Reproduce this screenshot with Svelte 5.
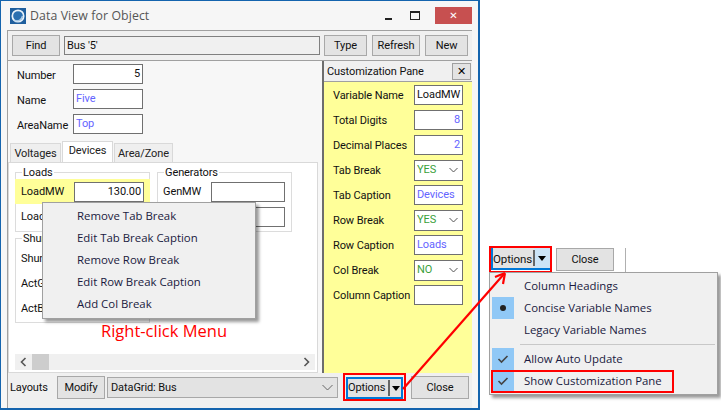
<script>
  const custFields = [
    { label: "Variable Name", value: "LoadMW", kind: "name" },
    { label: "Total Digits", value: "8", kind: "num" },
    { label: "Decimal Places", value: "2", kind: "num" },
    { label: "Tab Break", value: "YES", kind: "select" },
    { label: "Tab Caption", value: "Devices", kind: "text" },
    { label: "Row Break", value: "YES", kind: "select" },
    { label: "Row Caption", value: "Loads", kind: "text" },
    { label: "Col Break", value: "NO", kind: "select" },
    { label: "Column Caption", value: "", kind: "text" }
  ];
  const rightClick = [
    "Remove Tab Break",
    "Edit Tab Break Caption",
    "Remove Row Break",
    "Edit Row Break Caption",
    "Add Col Break"
  ];
</script>

<div class="screen">
  <div class="window">
    <div class="titlebar">
      <svg class="logo" width="16" height="16" viewBox="0 0 16 16">
        <rect width="16" height="16" fill="#1f5f9e" />
        <circle cx="8" cy="8" r="5.7" fill="#2a6fb0" stroke="#e8f1f9" stroke-width="1.7" />
        <path d="M4.5 12.5c3.500 1 7 0 8-4.500" fill="none" stroke="#a9cbe8" stroke-width="1.4" />
      </svg>
      <span class="title">Data View for Object</span>
      <div class="controls">
        <span class="min"></span>
        <span class="max"></span>
        <span class="close">✕</span>
      </div>
    </div>

    <div class="client">
      <div class="toolbar">
        <button class="find">Find</button>
        <div class="objname">Bus '5'</div>
        <button class="type">Type</button>
        <button class="refresh">Refresh</button>
        <button class="new">New</button>
      </div>

      <div class="middle">
        <div class="left">
          <div class="form">
            <span>Number</span><div class="input num black">5</div>
            <span>Name</span><div class="input blue">Five</div>
            <span>AreaName</span><div class="input blue">Top</div>
          </div>

          <div class="tabs">
            <span class="tab volt">Voltages</span>
            <span class="tab active">Devices</span>
            <span class="tab area">Area/Zone</span>
          </div>

          <div class="tabpanel">
            <div class="groups">
              <div class="col">
                <fieldset class="loads">
                  <legend>Loads</legend>
                  <div class="row hl"><span>LoadMW</span><div class="input num black">130.00</div></div>
                  <div class="row"><span>LoadMvar</span><div class="input"></div></div>
                </fieldset>
                <fieldset class="shunts">
                  <legend>Shunts</legend>
                  <div class="row"><span>ShuntMW</span></div>
                  <div class="row"><span>ActG</span></div>
                  <div class="row"><span>ActB</span></div>
                </fieldset>
              </div>
              <fieldset class="gens">
                <legend>Generators</legend>
                <div class="row"><span>GenMW</span><div class="input"></div></div>
                <div class="row"><span></span><div class="input"></div></div>
              </fieldset>
            </div>
            <div class="hscroll">
              <span class="arrow"><svg width="7" height="10" viewBox="0 0 7 10"><path d="M5.500 1L1.500 5l4 4" fill="none" stroke="#555" stroke-width="1.600" /></svg></span>
              <span class="thumb"></span>
              <span class="arrow end"><svg width="7" height="10" viewBox="0 0 7 10"><path d="M1.500 1l4 4-4 4" fill="none" stroke="#555" stroke-width="1.600" /></svg></span>
            </div>
          </div>
        </div>

        <div class="pane">
          <div class="panehead">
            <span>Customization Pane</span>
            <span class="panex">✕</span>
          </div>
          <div class="panebody">
            {#each custFields as f}
              <span>{f.label}</span>
              {#if f.kind === "select"}
                <div class="input sel green">{f.value}
                  <svg width="9" height="6" viewBox="0 0 9 6"><path d="M.5 1l4 4 4-4" fill="none" stroke="#555" /></svg>
                </div>
              {:else}
                <div class="input" class:num={f.kind === "num"} class:blue={f.kind !== "name"} class:black={f.kind === "name"}>{f.value}</div>
              {/if}
            {/each}
          </div>
        </div>
      </div>

      <div class="bottombar">
        <span class="layouts">Layouts</span>
        <button class="modify">Modify</button>
        <div class="layoutsel">DataGrid: Bus
          <svg width="11" height="7" viewBox="0 0 11 7"><path d="M.5 1l5 5 5-5" fill="none" stroke="#666" /></svg>
        </div>
        <div class="options">Options<i></i><b></b></div>
        <button class="closebtn">Close</button>
      </div>
    </div>
  </div>

  <!-- overlays -->
  <div class="menu rc">
    {#each rightClick as item}
      <div class="item">{item}</div>
    {/each}
  </div>
  <div class="caption">Right-click Menu</div>

  <div class="redbox b1"></div>

  <div class="callout">
    <div class="options">Options<i></i><b></b></div>
    <button class="closebtn">Close</button>
    <span class="vline"></span>
  </div>
  <div class="redbox b2"></div>

  <div class="menu opts">
    <div class="item">Column Headings</div>
    <div class="item"><span class="mark"><svg width="8" height="8"><circle cx="4" cy="4" r="3" fill="#222" /></svg></span>Concise Variable Names</div>
    <div class="item">Legacy Variable Names</div>
    <div class="sep"></div>
    <div class="item"><span class="mark"><svg width="12" height="10" viewBox="0 0 12 10"><path d="M1.500 5l3 3 6-6" fill="none" stroke="#444" stroke-width="1.600" /></svg></span>Allow Auto Update</div>
    <div class="item"><span class="mark"><svg width="12" height="10" viewBox="0 0 12 10"><path d="M1.500 5l3 3 6-6" fill="none" stroke="#444" stroke-width="1.600" /></svg></span>Show Customization Pane</div>
  </div>
  <div class="redbox b3"></div>

  <svg class="arrows" width="721" height="411" viewBox="0 0 721 411">
    <path d="M403 389 L504 274" stroke="#f00" stroke-width="2.200" fill="none" />
    <path d="M505 273 L495 277 M505 273 L503 284" stroke="#f00" stroke-width="2.200" fill="none" />
  </svg>
</div>

<style>
  :global(body) {
    margin: 0;
    background: #fff;
  }

  .screen {
    position: relative;
    width: 721px;
    height: 411px;
    overflow: hidden;
    font-family: Roboto, "Noto Sans", sans-serif;
    font-size: 11px;
    letter-spacing: -0.1px;
    color: #111;
  }

  .window {
    width: 480px;
    height: 410px;
    box-sizing: border-box;
    border: 1px solid #1464ae;
    border-width: 1px 2px 2px 1px;
    background: #f6f6f6;
    display: flex;
    flex-direction: column;
  }

  .titlebar {
    height: 29px;
    display: flex;
    align-items: center;
    padding-left: 9px;
    background: #f6f6f6;
    flex: none;
  }

  .logo {
    margin-right: 4px;
  }

  .title {
    font-family: "Open Sans", sans-serif;
    font-size: 12.3px;
    color: #555;
    letter-spacing: 0.1px;
  }

  .controls {
    margin-left: auto;
    display: flex;
    align-items: center;
    margin-right: 6px;
  }

  .min {
    width: 7px;
    height: 2px;
    background: #222;
    margin: 7px 18px 0 0;
  }

  .max {
    width: 8px;
    height: 6px;
    border: 1px solid #222;
    border-top-width: 2px;
    margin-right: 15px;
  }

  .close {
    width: 37px;
    height: 17px;
    background: #c75050;
    color: #fff;
    font-size: 10px;
    font-weight: 700;
    text-align: center;
    line-height: 17px;
    font-family: "DejaVu Sans", sans-serif;
  }

  .client {
    margin: 0 6px;
    flex: 1;
    min-height: 0;
    background: #f0f0f0;
    border: 1px solid #a0a0a0;
    border-width: 1px 0 0 1px;
    display: flex;
    flex-direction: column;
  }

  button {
    font: inherit;
    letter-spacing: inherit;
    color: inherit;
    background: #e3e3e3;
    border: 1px solid #a8a8a8;
    padding: 0;
    height: 21px;
  }

  .toolbar {
    display: flex;
    align-items: center;
    height: 29px;
    padding-left: 4px;
    border-bottom: 1px solid #a0a0a0;
    flex: none;
  }

  .find { width: 48px; margin-right: 4px; }
  .type { width: 43px; margin-right: 5px; }
  .refresh { width: 48px; margin-right: 5px; }
  .new { width: 43px; }

  .objname {
    width: 252px;
    height: 17px;
    line-height: 17px;
    border: 1px solid #808080;
    background: #f0f0f0;
    padding-left: 2px;
    margin-right: 4px;
  }

  .middle {
    flex: 1;
    min-height: 0;
    display: flex;
    background: #f0f0f0;
  }

  .left {
    width: 314px;
    flex: none;
    background: #f7f7f7;
    border-right: 2px solid #6d6d6d;
    display: flex;
    flex-direction: column;
  }

  .form {
    display: grid;
    grid-template-columns: 56px 70px;
    grid-auto-rows: 20px;
    row-gap: 5px;
    align-items: center;
    padding: 3px 0 0 9px;
  }

  .form span {
    padding-top: 2px;
  }

  .input {
    box-sizing: border-box;
    height: 20px;
    line-height: 16px;
    background: #fff;
    border: 1px solid #707070;
    padding: 1px 2px;
    white-space: nowrap;
    overflow: hidden;
  }

  .num { text-align: right; }
  .blue { color: #6464ff; }
  .black { color: #111; }
  .green { color: #3aa03a; }

  .tabs {
    display: flex;
    align-items: flex-end;
    height: 22px;
    margin-top: 6px;
    padding-left: 2px;
  }

  .tab {
    box-sizing: border-box;
    height: 19px;
    line-height: 19px;
    text-align: center;
    background: #efefef;
    border: 1px solid #d9d9d9;
    border-bottom: none;
    margin-right: 1px;
    color: #222;
  }

  .tab.volt { width: 51px; }
  .tab.area { width: 59px; }

  .tab.active {
    width: 51px;
    height: 21px;
    background: #fff;
    line-height: 18px;
  }

  .tabpanel {
    flex: 1;
    background: #fff;
    border: 1px solid #d9d9d9;
    margin-right: 4px;
    padding: 3px 1px 2px 6px;
    display: flex;
    flex-direction: column;
  }

  .groups {
    flex: 1;
    display: flex;
    gap: 7px;
    align-items: flex-start;
  }

  .col {
    display: flex;
    flex-direction: column;
  }

  fieldset {
    margin: 0;
    padding: 0;
    border: 1px solid #dcdcdc;
    box-sizing: border-box;
    width: 135px;
  }

  legend {
    padding: 0 1px;
    margin-left: 6px;
    line-height: 13px;
  }

  .loads, .gens { height: 66px; }

  .shunts {
    height: 91px;
    padding-top: 1px;
  }

  .row {
    display: grid;
    grid-template-columns: 53px 70px;
    align-items: center;
    height: 25px;
    padding-left: 5px;
  }

  .row.hl { background: #ffff99; margin: 0 -1px; padding-left: 6px; }

  .gens .row { grid-template-columns: 48px 74px; }

  .hscroll {
    height: 16px;
    margin-right: 1px;
    background: #f0f0f0;
    display: flex;
    align-items: center;
  }

  .arrow {
    width: 17px;
    height: 16px;
    display: flex;
    align-items: center;
    justify-content: center;
  }

  .arrow.end { margin-left: auto; }

  .thumb {
    width: 17px;
    height: 16px;
    background: #cdcdcd;
  }

  .pane {
    flex: 1;
    display: flex;
    flex-direction: column;
  }

  .panehead {
    height: 20px;
    display: flex;
    align-items: center;
    justify-content: space-between;
    padding: 0 1px 0 3px;
    border-bottom: 1px solid #a0a0a0;
  }

  .panex {
    width: 17px;
    height: 15px;
    line-height: 15px;
    text-align: center;
    font-size: 11px;
    color: #000;
    font-family: "DejaVu Sans", sans-serif;
    font-weight: 700;
    background: #e3e3e3;
    border: 1px solid #a0a0a0;
  }

  .panebody {
    flex: 1;
    background: #ffff99;
    display: grid;
    grid-template-columns: 81px 49px;
    grid-auto-rows: 20px;
    row-gap: 5px;
    align-items: center;
    align-content: start;
    padding: 3px 0 0 9px;
    white-space: nowrap;
  }

  .sel {
    display: flex;
    align-items: center;
    justify-content: space-between;
    padding-right: 4px;
    height: 21px;
  }

  .bottombar {
    height: 35px;
    flex: none;
    display: flex;
    align-items: center;
    padding-bottom: 6px;
    box-sizing: border-box;
  }

  .layouts {
    margin-left: 2px;
    width: 47px;
  }

  .modify {
    width: 48px;
    height: 23px;
    margin-right: 2px;
  }

  .layoutsel {
    box-sizing: border-box;
    width: 231px;
    height: 21px;
    line-height: 18px;
    background: #e3e3e3;
    border: 1px solid #a8a8a8;
    padding-left: 3px;
    display: flex;
    align-items: center;
    justify-content: space-between;
    padding-right: 4px;
    margin-right: 8px;
  }

  .options {
    box-sizing: border-box;
    width: 57px;
    height: 22px;
    line-height: 18px;
    border: 2px solid #0078d7;
    background: #e3e3e3;
    position: relative;
    flex: none;
  }

  .options i {
    position: absolute;
    left: 40px;
    top: 1px;
    width: 2px;
    height: 16px;
    background: #666;
  }

  .options b {
    position: absolute;
    left: 44px;
    top: 7px;
    border: 4px solid transparent;
    border-top: 5px solid #000;
    border-bottom: none;
  }

  .bottombar .closebtn {
    width: 58px;
    height: 23px;
    margin-left: 8px;
  }

  .redbox {
    position: absolute;
    box-sizing: border-box;
    border: 2px solid #f00;
  }

  .b1 { left: 343px; top: 373px; width: 63px; height: 28px; }
  .b2 { left: 489px; top: 246px; width: 63px; height: 27px; }
  .b3 { left: 491px; top: 370px; width: 183px; height: 23px; }

  .menu {
    position: absolute;
    box-sizing: border-box;
    background: #f0f0f0;
    border: 1px solid #a0a0a0;
    box-shadow: 3px 3px 3px rgba(0, 0, 0, 0.4);
    color: #1a1a40;
    font-family: "Open Sans", sans-serif;
    font-size: 11.4px;
    letter-spacing: 0;
  }

  .menu.rc {
    left: 42px;
    top: 202px;
    width: 214px;
    height: 117px;
    padding-top: 2px;
  }

  .item {
    position: relative;
    height: 22px;
    line-height: 21px;
    padding-left: 34px;
  }

  .caption {
    position: absolute;
    left: 101px;
    top: 319px;
    color: #f00;
    font-family: "Open Sans", sans-serif;
    font-size: 16.5px;
    letter-spacing: 0;
  }

  .callout {
    position: absolute;
    left: 491px;
    top: 248px;
    display: flex;
    align-items: flex-start;
  }

  .callout .options {
    height: 22px;
    width: 59px;
    border-width: 0 0 2px 2px;
    background: linear-gradient(90deg, #e3e3e3 41px, #cce4f7 41px);
    padding: 2px 0 0 0;
    font-size: 11.5px;
  }

  .callout .options i { left: 40px; top: 2px; }
  .callout .options b { left: 45px; top: 8px; }

  .callout .closebtn {
    width: 58px;
    height: 23px;
    margin-left: 6px;
  }

  .vline {
    width: 1px;
    height: 25px;
    background: #b0b0b0;
    margin-left: 11px;
  }

  .menu.opts {
    left: 489px;
    top: 272px;
    width: 229px;
    height: 123px;
    padding-top: 2px;
  }

  .mark {
    position: absolute;
    left: 2px;
    top: 0;
    width: 22px;
    height: 22px;
    background: #90c8f6;
    display: flex;
    align-items: center;
    justify-content: center;
  }

  .sep {
    height: 1px;
    background: #c8c8c8;
    margin: 3px 2px 3px 30px;
  }

  .arrows {
    position: absolute;
    left: 0;
    top: 0;
    pointer-events: none;
  }
</style>
